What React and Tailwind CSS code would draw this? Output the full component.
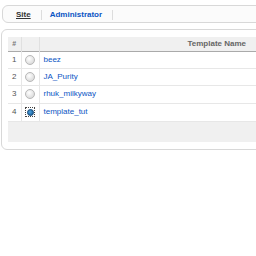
import React from 'react';

const rows = [
  { n: 1, name: 'beez', h: 'h-[17px]' },
  { n: 2, name: 'JA_Purity', h: 'h-[17px]' },
  { n: 3, name: 'rhuk_milkyway', h: 'h-[18px]' },
  { n: 4, name: 'template_tut', h: 'h-[18px]', checked: true },
];

const Radio = ({ checked }) =>
  checked ? (
    <span className="w-[10px] h-[10px] border border-dotted border-[#444] flex items-center justify-center">
      <span className="w-[7px] h-[7px] rounded-full bg-[radial-gradient(circle_at_40%_40%,#4fa3e0,#0a4f8a)] border border-[#1d4d7a]" />
    </span>
  ) : (
    <span className="w-[10px] h-[10px] rounded-full border border-[#b8b8b8] bg-[radial-gradient(circle_at_40%_35%,#ffffff,#d0d0d0)]" />
  );

export default function App() {
  return (
    <div className="w-[256px] h-[256px] bg-white overflow-hidden font-['Liberation_Sans',Arial,sans-serif] text-[8px]">
      <div className="pt-[5px] pl-[2px] w-[330px]">
        <div className="h-[18px] border border-[#d8d8d8] rounded-[6px] bg-[#fbfbfb] flex items-center pl-[13px] pt-px">
          <span className="font-bold text-[#333] underline">Site</span>
          <span className="w-px h-[10px] bg-[#ddd] ml-[10px] mr-[8px]" />
          <span className="font-bold text-[#0b55c4]">Administrator</span>
          <span className="w-px h-[10px] bg-[#ddd] ml-[10px]" />
        </div>
        <div className="mt-[6px] ml-[-1px] border border-[#d8d8d8] rounded-[6px] h-[121px] pl-[6px] pt-[7px]">
          <table className="w-[320px] border-collapse">
            <thead>
              <tr className="h-[14px] bg-[#f0f0f0] border-b border-[#aaa]">
                <th className="w-[13px] text-[7px] text-[#777] font-bold text-center border-r border-[#e0e0e0]">#</th>
                <th className="w-[18px] border-r border-[#e0e0e0]" />
                <th className="text-[#666] font-bold text-center pl-[66px]">Template Name</th>
              </tr>
            </thead>
            <tbody>
              {rows.map((r) => (
                <tr key={r.n} className={`${r.h} border-b border-[#e7e7e7]`}>
                  <td className="text-center text-[#555] border-r border-[#e7e7e7]">{r.n}</td>
                  <td className="border-r border-[#e7e7e7]">
                    <div className="flex justify-center">
                      <Radio checked={r.checked} />
                    </div>
                  </td>
                  <td className="pl-[4px] text-[#0b55c4]">{r.name}</td>
                </tr>
              ))}
            </tbody>
            <tfoot>
              <tr className="h-[21px] bg-[#f0f0f0] border-t border-[#bbb]">
                <td colSpan={3} />
              </tr>
            </tfoot>
          </table>
        </div>
      </div>
    </div>
  );
}
